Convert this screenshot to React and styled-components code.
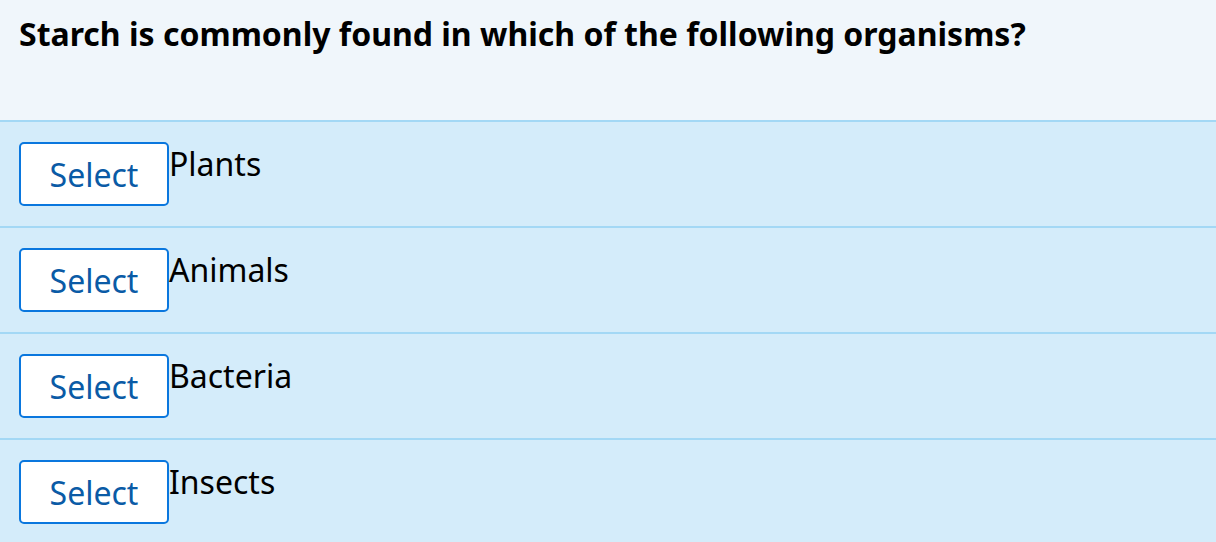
import React from 'react';
import styled, { createGlobalStyle } from 'styled-components';

const GlobalStyle = createGlobalStyle`
  html, body {
    margin: 0;
    padding: 0;
    background: #d4ecfa;
  }
  body {
    font-family: "Noto Sans", "Open Sans", sans-serif;
    color: #000;
  }
`;

const Quiz = styled.div`
  display: flex;
  flex-direction: column;
  width: 1216px;
`;

const Question = styled.h2`
  margin: 0;
  height: 120px;
  box-sizing: border-box;
  padding: 12px 19px 0 19px;
  background: #f0f6fb;
  font-size: 32px;
  font-weight: 700;
  line-height: normal;
`;

const Option = styled.div`
  display: flex;
  align-items: flex-start;
  padding: 20px 19px;
  border-top: 2px solid #a3d8f5;
  background: #d4ecfa;
`;

const SelectButton = styled.button`
  width: 150px;
  height: 64px;
  box-sizing: border-box;
  border: 2px solid #0a77de;
  border-radius: 5px;
  background: #fff;
  color: #0a5ba6;
  font-family: "Noto Sans", "Open Sans", sans-serif;
  font-size: 32px;
  line-height: normal;
  padding: 0;
  cursor: pointer;
`;

const Label = styled.span`
  font-size: 32px;
  line-height: normal;
`;

const options = ['Plants', 'Animals', 'Bacteria', 'Insects'];

export default function App() {
  return (
    <>
      <GlobalStyle />
      <Quiz>
        <Question>Starch is commonly found in which of the following organisms?</Question>
        {options.map((opt) => (
          <Option key={opt}>
            <SelectButton>Select</SelectButton>
            <Label>{opt}</Label>
          </Option>
        ))}
      </Quiz>
    </>
  );
}
